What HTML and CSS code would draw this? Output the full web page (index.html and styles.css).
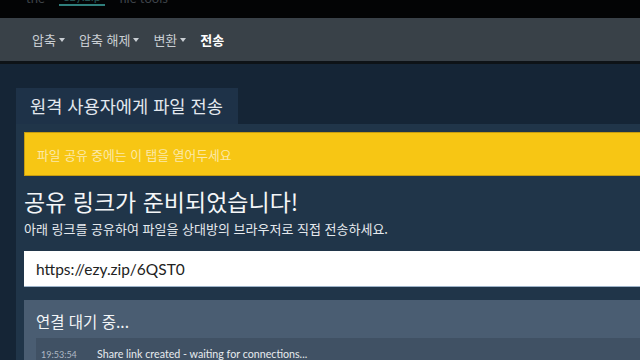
FILE: index.html
```html
<!DOCTYPE html>
<html lang="ko">
<head>
<meta charset="utf-8">
<title>원격 사용자에게 파일 전송</title>
<link rel="stylesheet" href="styles.css">
</head>
<body>
<header class="topbar">
  <div class="logo"><span class="logo-a">the</span><span class="logo-b">ezy.zip</span><span class="logo-c">file tools</span></div>
</header>
<nav class="navbar">
  <a class="nav-item">압축<span class="caret"></span></a>
  <a class="nav-item">압축 해제<span class="caret"></span></a>
  <a class="nav-item">변환<span class="caret"></span></a>
  <a class="nav-item active">전송</a>
</nav>
<main class="page">
  <section class="card">
    <div class="card-tab">원격 사용자에게 파일 전송</div>
    <div class="card-body">
      <div class="alert">파일 공유 중에는 이 탭을 열어두세요</div>
      <h1 class="title">공유 링크가 준비되었습니다!</h1>
      <p class="subtitle">아래 링크를 공유하여 파일을 상대방의 브라우저로 직접 전송하세요.</p>
      <div class="link-box">https://ezy.zip/6QST0</div>
      <div class="status-panel">
        <h2 class="status-title">연결 대기 중...</h2>
        <div class="log">
          <div class="log-row"><span class="log-time">19:53:54</span><span class="log-msg">Share link created - waiting for connections...</span></div>
        </div>
      </div>
    </div>
  </section>
</main>
</body>
</html>
```
FILE: styles.css
```css
* { box-sizing: border-box; }
html, body { margin: 0; padding: 0; }
body {
  width: 640px;
  height: 360px;
  overflow: hidden;
  background: #152536;
  font-family: "Lato", "Noto Sans CJK KR", sans-serif;
  color: #e8edf2;
}
.topbar {
  height: 18px;
  background: #030405;
  display: flex;
  align-items: flex-end;
  overflow: hidden;
  padding-left: 26px;
}
.logo {
  display: flex;
  gap: 14px;
  align-items: flex-end;
  flex-shrink: 0;
  margin-bottom: 12px;
  font-size: 13px;
  line-height: 16px;
  color: #3e4349;
}
.logo-b {
  color: #24504f;
  border-bottom: 2px solid #2f7f7c;
  padding: 0 4px;
}
.navbar {
  height: 43px;
  background: #394148;
  border-bottom: 3px solid #0e1317;
  display: flex;
  align-items: center;
  padding-left: 32px;
  gap: 14px;
  box-sizing: content-box;
}
.nav-item {
  font-family: "Noto Sans CJK KR", sans-serif;
  font-size: 13px;
  color: #c9ced3;
  display: flex;
  align-items: center;
  gap: 3px;
}
.nav-item.active { color: #ffffff; font-weight: 700; }
.caret {
  width: 0; height: 0;
  border-left: 3.5px solid transparent;
  border-right: 3.5px solid transparent;
  border-top: 4px solid #c9ced3;
}
.page { padding: 24px 0 0 16px; }
.card { display: flex; flex-direction: column; }
.card-tab {
  align-self: flex-start;
  width: 222px;
  height: 36px;
  background: #1e3248;
  font-family: "Noto Sans CJK KR", sans-serif;
  font-size: 17.6px;
  line-height: 36px;
  padding-left: 14px;
  color: #e3e8ee;
  white-space: nowrap;
}
.card-body {
  background: #203549;
  padding: 8px 0 0 8px;
}
.alert {
  height: 44px;
  background: #f7c614;
  border: 1px solid #c79c10;
  border-right: none;
  font-family: "Noto Sans CJK KR", sans-serif;
  font-size: 12.8px;
  color: #fbe9a8;
  display: flex;
  align-items: center;
  padding-left: 12px;
}
.title {
  margin: 8px 0 0 0;
  font-family: "Noto Sans CJK KR", sans-serif;
  font-weight: 400;
  font-size: 23px;
  line-height: 34px;
  color: #f4f6f8;
}
.subtitle {
  margin: 0;
  font-family: "Noto Sans CJK KR", sans-serif;
  font-size: 13px;
  line-height: 22px;
  color: #e6eaee;
}
.link-box {
  margin-top: 11px;
  height: 36px;
  background: #ffffff;
  border-bottom: 1px solid #9db3c9;
  font-family: "Lato", sans-serif;
  font-size: 15.5px;
  color: #222;
  display: flex;
  align-items: center;
  padding-left: 12px;
}
.status-panel {
  margin-top: 13px;
  background: #4a5d72;
  padding: 10px 0 0 12px;
  height: 60px;
}
.status-title {
  margin: 0;
  font-family: "Noto Sans CJK KR", sans-serif;
  font-weight: 400;
  font-size: 15.5px;
  line-height: 22px;
  color: #f2f4f6;
}
.log {
  margin-top: 6px;
  background: #405164;
  height: 22px;
  padding: 9px 0 0 5px;
  overflow: hidden;
}
.log-row { display: flex; align-items: baseline; }
.log-time {
  width: 56px;
  font-size: 9px;
  line-height: 13px;
  color: #aeb8c3;
}
.log-msg {
  font-size: 10.7px;
  line-height: 13px;
  color: #e7ebef;
}
```
